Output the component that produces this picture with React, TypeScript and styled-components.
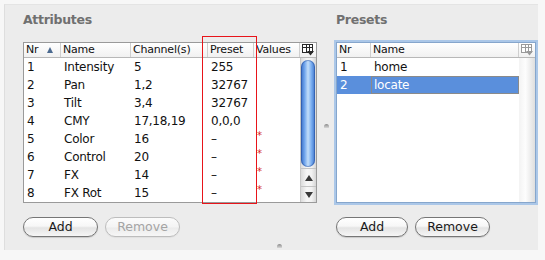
import React from "react";
import styled, { createGlobalStyle } from "styled-components";

const Global = createGlobalStyle`
  html, body { margin: 0; padding: 0; background: #f7f7f7; }
  body { font-family: "DejaVu Sans", "Liberation Sans", sans-serif; }
`;

const Window = styled.div`
  margin: 4px 0 0 4px;
  width: 534px;
  height: 246px;
  box-sizing: border-box;
  background: #ececec;
  border-left: 1px solid #dedede;
  border-top: 1px solid #e4e4e4;
  display: flex;
  flex-direction: column;
`;

const Panes = styled.div`
  display: flex;
  padding: 7px 0 0 18px;
`;

const Pane = styled.div<{ $w: number }>`
  width: ${(p) => p.$w}px;
  display: flex;
  flex-direction: column;
`;

const Title = styled.div`
  font-family: "DejaVu Sans", sans-serif;
  font-weight: bold;
  font-size: 12.5px;
  letter-spacing: -0.3px;
  line-height: 16px;
  color: #707070;
  margin: 0 0 14px 0;
  height: 16px;
`;

const Divider = styled.div`
  width: 19px;
  display: flex;
  align-items: flex-start;
  justify-content: center;
  padding-top: 112px;
`;

const Grip = styled.div`
  width: 5px;
  height: 4px;
  border-radius: 3px 3px 1px 1px;
  background: linear-gradient(#8a8a8a, #d8d8d8);
`;

const Frame = styled.div<{ $focus?: boolean }>`
  position: relative;
  box-sizing: border-box;
  border: 1px solid ${(p) => (p.$focus ? "#86a6cc" : "#9a9a9a")};
  box-shadow: ${(p) => (p.$focus ? "0 0 0 2px #abc7e8" : "none")};
  background: #fff;
  display: flex;
  flex-direction: column;
`;

const HeaderRow = styled.div<{ $cols: string }>`
  display: grid;
  grid-template-columns: ${(p) => p.$cols};
  height: 15px;
  box-sizing: border-box;
  border-bottom: 1px solid #b8b8b8;
  background: linear-gradient(#ffffff, #f1f1f1);
`;

const HeadCell = styled.div`
  font-size: 11px;
  letter-spacing: -0.2px;
  color: #111;
  line-height: 14px;
  padding-left: 2px;
  border-right: 1px solid #cfcfcf;
  display: flex;
  align-items: center;
  justify-content: space-between;
  padding-right: 7px;
  overflow: hidden;
  white-space: nowrap;
`;

const SortUp = styled.span`
  width: 0;
  height: 0;
  border-left: 3.5px solid transparent;
  border-right: 3.5px solid transparent;
  border-bottom: 6px solid #4b6a90;
`;

const Corner = styled.div`
  display: flex;
  align-items: center;
  justify-content: center;
`;

const BodyArea = styled.div<{ $h: number }>`
  display: flex;
  height: ${(p) => p.$h}px;
`;

const Rows = styled.div`
  flex: 1;
  display: flex;
  flex-direction: column;
`;

const Row = styled.div<{ $cols: string; $sel?: boolean }>`
  display: grid;
  grid-template-columns: ${(p) => p.$cols};
  height: 18px;
  background: ${(p) => (p.$sel ? "#5a8fdc" : "transparent")};
  color: ${(p) => (p.$sel ? "#fff" : "#111")};
`;

const Cell = styled.div<{ $focus?: boolean }>`
  font-size: 12px;
  letter-spacing: -0.25px;
  padding-left: ${(p) => (p.$focus ? "2px" : "3px")};
  white-space: nowrap;
  overflow: hidden;
  box-sizing: border-box;
  border: ${(p) => (p.$focus ? "1px solid #8a8a8a" : "none")};
  line-height: ${(p) => (p.$focus ? "16px" : "18px")};
  position: relative;
`;

const Star = styled.span`
  position: absolute;
  left: 3px;
  top: -3px;
  font-size: 10px;
  color: #d42a2a;
`;

const Track = styled.div`
  width: 16px;
  display: flex;
  flex-direction: column;
  background: linear-gradient(to right, #dcdcdc, #f7f7f7 40%, #f2f2f2 70%, #d6d6d6);
  border-left: 1px solid #c8c8c8;
  box-sizing: border-box;
`;

const ThumbArea = styled.div`
  flex: 1;
  padding: 2px 1px 0 0;
  display: flex;
`;

const Thumb = styled.div`
  width: 14px;
  height: 107px;
  border-radius: 7px;
  background: linear-gradient(
    to right,
    #3b6fc4,
    #6fa4ec 25%,
    #c3def9 50%,
    #78acef 75%,
    #3f74c9
  );
  box-shadow: inset 0 0 0 1px rgba(30, 70, 150, 0.45);
`;

const ArrowBtn = styled.div<{ $h: number }>`
  height: ${(p) => p.$h}px;
  border-top: 1px solid #c4c4c4;
  box-sizing: border-box;
  display: flex;
  align-items: center;
  justify-content: center;
`;

const TriUp = styled.span`
  width: 0;
  height: 0;
  border-left: 4px solid transparent;
  border-right: 4px solid transparent;
  border-bottom: 6px solid #3a3a3a;
`;

const TriDown = styled.span`
  width: 0;
  height: 0;
  border-left: 4px solid transparent;
  border-right: 4px solid transparent;
  border-top: 6px solid #3a3a3a;
`;

const EmptyColumn = styled.div`
  width: 16px;
  background: linear-gradient(to right, #f3f3f3, #fdfdfd 40%, #dedede);
`;

const Highlight = styled.div`
  position: absolute;
  left: 178px;
  top: -7px;
  width: 55px;
  height: 168px;
  box-sizing: border-box;
  border: 1px solid #e8141a;
  pointer-events: none;
`;

const Buttons = styled.div`
  display: flex;
  gap: 7px;
  margin-top: 14px;
`;

const Pill = styled.button<{ $w: number }>`
  width: ${(p) => p.$w}px;
  height: 20px;
  border-radius: 10px;
  border: 1px solid ${(p) => (p.disabled ? "#bdbdbd" : "#767676")};
  background: ${(p) =>
    p.disabled
      ? "linear-gradient(#fbfbfb, #f4f4f4 50%, #ececec 55%, #f6f6f6)"
      : "linear-gradient(#ffffff, #f7f7f7 45%, #e4e4e4 55%, #f6f6f6)"};
  box-shadow: 0 1px 1px rgba(0, 0, 0, ${(p) => (p.disabled ? 0.05 : 0.15)});
  font-family: "DejaVu Sans", sans-serif;
  font-size: 12.5px;
  color: ${(p) => (p.disabled ? "#a4a4a4" : "#1a1a1a")};
  padding: 0;
  line-height: 18px;
`;

const Footer = styled.div`
  flex: 1;
  display: flex;
  justify-content: center;
  align-items: flex-end;
  padding: 0 0 2px 16px;
`;

const ColumnIcon = ({ color }: { color: string }) => (
  <svg width="12" height="12" viewBox="0 0 12 12">
    <rect x="0.5" y="0.5" width="10" height="8" fill="#fff" stroke={color} />
    <line x1="0.5" y1="3.5" x2="10.5" y2="3.5" stroke={color} />
    <line x1="4.5" y1="0.5" x2="4.5" y2="8.5" stroke={color} />
    <line x1="7.5" y1="0.5" x2="7.5" y2="8.5" stroke={color} />
    <polygon points="5,7 12,7 8.5,11.5" fill={color} />
  </svg>
);

const attrCols = "37px 70px 77px 46px 46px";
const attrHeadCols = attrCols + " 16px";
const presetCols = "34px 148px";
const presetHeadCols = presetCols + " 16px";

const attributes = [
  ["1", "Intensity", "5", "255", false],
  ["2", "Pan", "1,2", "32767", false],
  ["3", "Tilt", "3,4", "32767", false],
  ["4", "CMY", "17,18,19", "0,0,0", false],
  ["5", "Color", "16", "–", true],
  ["6", "Control", "20", "–", true],
  ["7", "FX", "14", "–", true],
  ["8", "FX Rot", "15", "–", true],
] as const;

const presets = [
  { nr: "1", name: "home", sel: false },
  { nr: "2", name: "locate", sel: true },
];

export default function App() {
  return (
    <>
      <Global />
      <Window>
        <Panes>
          <Pane $w={294}>
            <Title>Attributes</Title>
            <Frame>
              <HeaderRow $cols={attrHeadCols}>
                <HeadCell>
                  Nr <SortUp />
                </HeadCell>
                <HeadCell>Name</HeadCell>
                <HeadCell>Channel(s)</HeadCell>
                <HeadCell>Preset</HeadCell>
                <HeadCell>Values</HeadCell>
                <Corner>
                  <ColumnIcon color="#2a2a2a" />
                </Corner>
              </HeaderRow>
              <BodyArea $h={144}>
                <Rows>
                  {attributes.map(([nr, name, ch, preset, star]) => (
                    <Row key={nr} $cols={attrCols}>
                      <Cell>{nr}</Cell>
                      <Cell>{name}</Cell>
                      <Cell>{ch}</Cell>
                      <Cell>{preset}</Cell>
                      <Cell>{star ? <Star>*</Star> : null}</Cell>
                    </Row>
                  ))}
                </Rows>
                <Track>
                  <ThumbArea>
                    <Thumb />
                  </ThumbArea>
                  <ArrowBtn $h={18}>
                    <TriUp />
                  </ArrowBtn>
                  <ArrowBtn $h={16}>
                    <TriDown />
                  </ArrowBtn>
                </Track>
              </BodyArea>
              <Highlight />
            </Frame>
            <Buttons>
              <Pill $w={75}>Add</Pill>
              <Pill $w={75} disabled>
                Remove
              </Pill>
            </Buttons>
          </Pane>
          <Divider>
            <Grip />
          </Divider>
          <Pane $w={200}>
            <Title>Presets</Title>
            <Frame $focus>
              <HeaderRow $cols={presetHeadCols}>
                <HeadCell>Nr</HeadCell>
                <HeadCell>Name</HeadCell>
                <Corner>
                  <ColumnIcon color="#9a9a9a" />
                </Corner>
              </HeaderRow>
              <BodyArea $h={144}>
                <Rows>
                  {presets.map((p) => (
                    <Row key={p.nr} $cols={presetCols} $sel={p.sel}>
                      <Cell>{p.nr}</Cell>
                      <Cell $focus={p.sel}>{p.name}</Cell>
                    </Row>
                  ))}
                </Rows>
                <EmptyColumn />
              </BodyArea>
            </Frame>
            <Buttons>
              <Pill $w={72}>Add</Pill>
              <Pill $w={75}>Remove</Pill>
            </Buttons>
          </Pane>
        </Panes>
        <Footer>
          <Grip />
        </Footer>
      </Window>
    </>
  );
}
